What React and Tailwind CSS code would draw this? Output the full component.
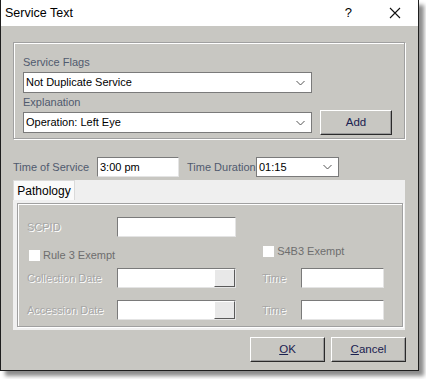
import React from "react";

const font = { fontFamily: '"Liberation Sans", Arial, sans-serif' };

function Chevron() {
  return (
    <svg width="9" height="6" viewBox="0 0 9 6" className="shrink-0">
      <path d="M0.5 1 L4.5 5 L8.5 1" fill="none" stroke="#555" strokeWidth="1" />
    </svg>
  );
}

function Combo({ text, className }) {
  return (
    <div className={"flex items-center justify-between bg-white border border-[#7a7a7a] pl-[2px] pr-[6px] text-[11px] text-black whitespace-nowrap " + className}>
      <span>{text}</span>
      <Chevron />
    </div>
  );
}

function Btn({ children, className }) {
  return (
    <div className={"flex items-center justify-center bg-[#c8c7c2] border border-t-white border-l-white border-r-[#2a2a2a] border-b-[#2a2a2a] shadow-[inset_-1px_-1px_0_#9a9a9a] text-[11.5px] text-[#1a2150] whitespace-nowrap " + className}>
      {children}
    </div>
  );
}

function Input({ className, text, button }) {
  return (
    <div className={"flex items-center bg-white border border-t-[#7a7a7a] border-l-[#7a7a7a] border-r-[#e4e4e4] border-b-[#e4e4e4] text-[11px] text-black pl-[2px] whitespace-nowrap " + className}>
      <span className="flex-1">{text}</span>
      {button && (
        <div className="w-[21px] h-full bg-[#e8e8e8] border border-t-white border-l-white border-r-[#5a5a5a] border-b-[#5a5a5a]" />
      )}
    </div>
  );
}

const disabled = "text-[#a6a6a6] [text-shadow:1px_1px_0_#ffffff] whitespace-nowrap";

export default function App() {
  return (
    <div className="w-[426px] h-[379px] bg-white" style={font}>
      <div className="w-[419px] h-[371px] bg-[#c8c7c2] border-x border-b border-[#1e1e1e] shadow-[5px_5px_4px_rgba(0,0,0,0.45)] flex flex-col">
        {/* Title bar */}
        <div className="h-[26px] bg-white flex items-center shrink-0">
          <span className="pl-[4px] text-[12.5px] text-black">Service Text</span>
          <span className="ml-auto mr-[37px] text-[13px] text-black">?</span>
          <svg width="12" height="12" viewBox="0 0 12 12" className="mr-[17px]">
            <path d="M1 1 L11 11 M11 1 L1 11" stroke="#111" strokeWidth="1.1" />
          </svg>
        </div>

        {/* Body */}
        <div className="flex flex-col pl-[12px] pt-[16px]">
          {/* Group */}
          <div className="w-[392px] h-[97px] border border-[#a0a0a0] shadow-[inset_1px_1px_0_#ffffff,1px_1px_0_#ffffff] pl-[9px] pt-[13px] flex flex-col">
            <div className="text-[11px] leading-[13px] text-[#505a6e]">Service Flags</div>
            <Combo text="Not Duplicate Service" className="mt-[3px] w-[289px] h-[21px]" />
            <div className="mt-[3px] text-[11px] leading-[13px] text-[#505a6e]">Explanation</div>
            <div className="flex items-center mt-[1px]">
              <Combo text="Operation: Left Eye" className="w-[289px] h-[21px]" />
              <Btn className="ml-[8px] w-[72px] h-[25px]">Add</Btn>
            </div>
          </div>

          {/* Time row */}
          <div className="flex items-center mt-[18px] h-[20px]">
            <span className="text-[11px] text-[#505a6e] w-[84px] whitespace-nowrap">Time of Service</span>
            <Input text="3:00 pm" className="w-[82px] h-[20px]" />
            <span className="ml-[8px] text-[11px] text-[#505a6e] w-[69px] whitespace-nowrap">Time Duration</span>
            <Combo text="01:15" className="w-[83px] h-[20px]" />
          </div>

          {/* Tab control */}
          <div className="mt-[3px] w-[392px] flex flex-col">
            <div className="flex h-[20px] bg-[#efefef]">
              <div className="w-[62px] h-[20px] bg-[#fafafa] border border-b-0 border-[#dadada] flex items-center justify-center text-[12px] text-black">
                Pathology
              </div>
            </div>
            <div className="h-[130px] bg-[#f0f0f0] pt-[3px] pl-[4px] pr-[2px] pb-[3px]">
              <div className="h-full bg-[#c8c7c2] border border-[#a0a0a0] shadow-[inset_1px_1px_0_#ffffff,1px_1px_0_#ffffff] flex flex-col pl-[9px] pt-[13px]">
                {/* SCPID */}
                <div className="flex items-center h-[20px]">
                  <span className={"w-[90px] text-[11px] " + disabled}>SCPID</span>
                  <Input className="w-[119px] h-[20px]" />
                </div>
                {/* Checkboxes */}
                <div className="flex items-start h-[31px]">
                  <div className="flex items-center mt-[10px] ml-[2px]">
                    <div className="w-[11px] h-[11px] bg-white" />
                    <span className="ml-[3px] text-[11px] text-[#6e6e6e] whitespace-nowrap">Rule 3 Exempt</span>
                  </div>
                  <div className="flex items-center mt-[6px] ml-[148px]">
                    <div className="w-[11px] h-[11px] bg-white" />
                    <span className="ml-[3px] text-[11px] text-[#6e6e6e] whitespace-nowrap">S4B3 Exempt</span>
                  </div>
                </div>
                {/* Collection Date */}
                <div className="flex items-center h-[20px]">
                  <span className={"w-[90px] text-[11px] " + disabled}>Collection Date</span>
                  <Input className="w-[119px] h-[20px]" button />
                  <span className={"ml-[26px] w-[39px] text-[11px] " + disabled}>Time</span>
                  <Input className="w-[83px] h-[20px]" />
                </div>
                {/* Accession Date */}
                <div className="flex items-center h-[20px] mt-[12px]">
                  <span className={"w-[90px] text-[11px] " + disabled}>Accession Date</span>
                  <Input className="w-[119px] h-[20px]" button />
                  <span className={"ml-[26px] w-[39px] text-[11px] " + disabled}>Time</span>
                  <Input className="w-[83px] h-[20px]" />
                </div>
              </div>
            </div>
          </div>

          {/* Buttons */}
          <div className="flex mt-[7px] pl-[237px]">
            <Btn className="w-[75px] h-[25px]"><span><u>O</u>K</span></Btn>
            <Btn className="ml-[6px] w-[75px] h-[25px]"><span><u>C</u>ancel</span></Btn>
          </div>
        </div>
      </div>
    </div>
  );
}
